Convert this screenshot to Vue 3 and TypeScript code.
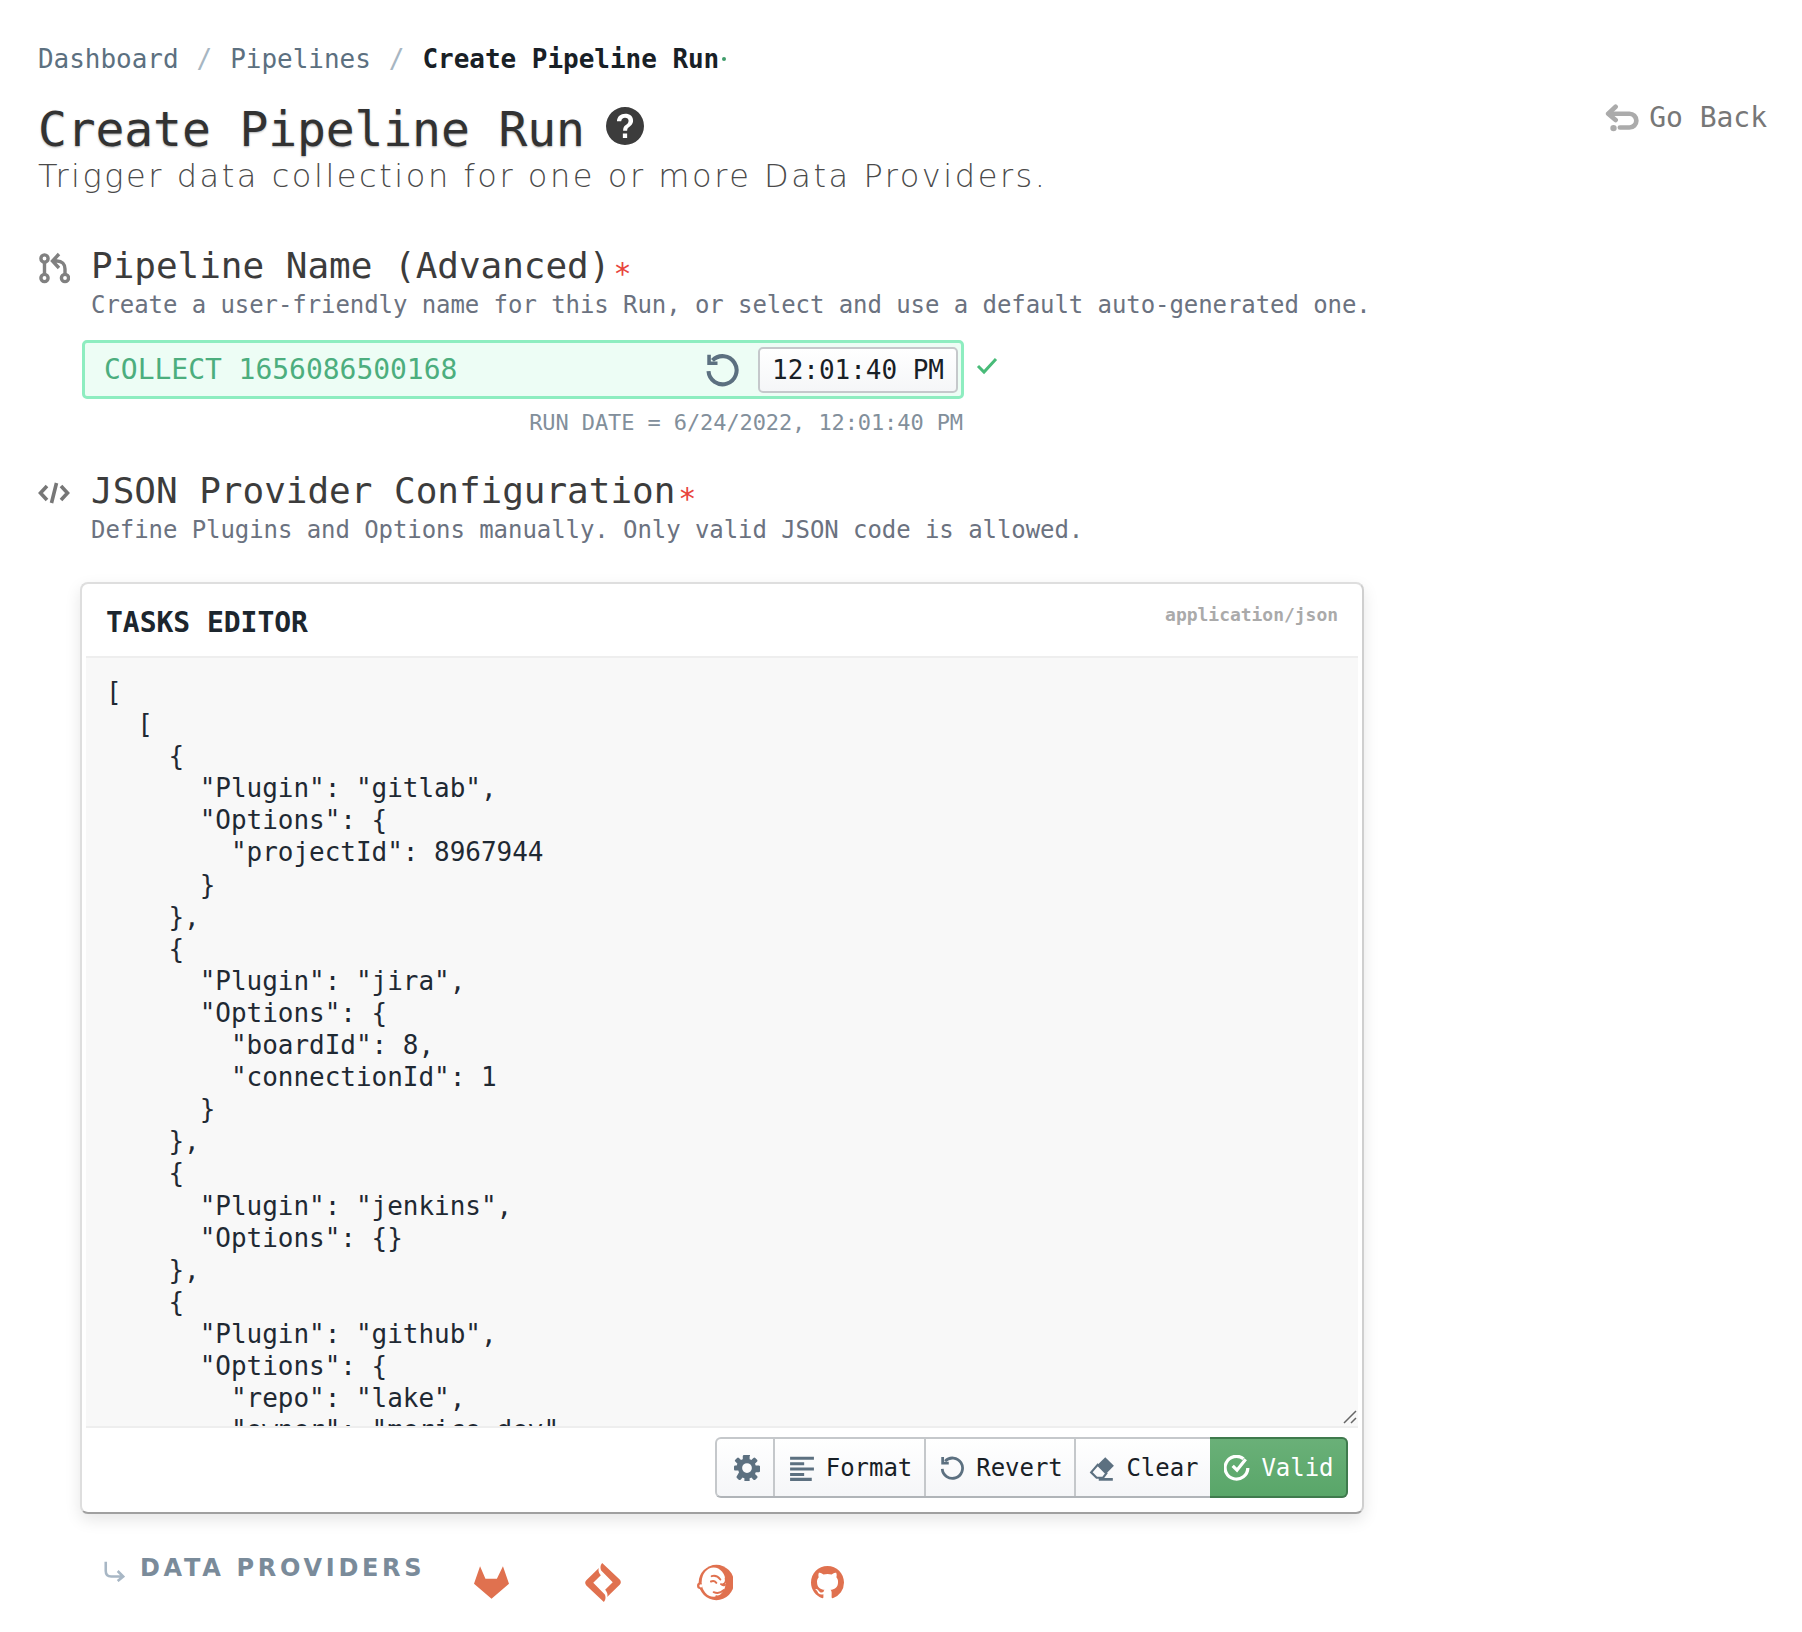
<script setup lang="ts">
const crumbs: string[] = ['Dashboard', 'Pipelines']
const code: string = `[
  [
    {
      "Plugin": "gitlab",
      "Options": {
        "projectId": 8967944
      }
    },
    {
      "Plugin": "jira",
      "Options": {
        "boardId": 8,
        "connectionId": 1
      }
    },
    {
      "Plugin": "jenkins",
      "Options": {}
    },
    {
      "Plugin": "github",
      "Options": {
        "repo": "lake",
        "owner": "merico-dev",`
</script>

<template>
  <div class="page">
    <nav class="crumbs">
      <template v-for="c in crumbs" :key="c">
        <span class="crumb">{{ c }}</span>
        <span class="sep">/</span>
      </template>
      <span class="crumb-current">Create Pipeline Run</span>
      <span class="crumb-dot"></span>
    </nav>

    <header class="head">
      <div class="head-main">
        <h1 class="title">
          <span>Create Pipeline Run</span>
          <svg class="help" viewBox="0 0 16 16"><path fill="#3c3c3c" fill-rule="evenodd" d="M8 0a8 8 0 1 0 0 16A8 8 0 0 0 8 0zm.9 13H7.100v-1.800h1.800V13zm1.900-5.500c-.4.5-.9.8-1.300 1.100-.4.3-.6.7-.6 1.400H7.200c0-1.200.4-1.900 1-2.300.4-.3.8-.6 1-.9.2-.3.3-.6.3-1 0-.8-.6-1.300-1.500-1.300S6.500 5 6.400 6H4.600c.1-2 1.500-3.200 3.500-3.200s3.300 1.100 3.300 2.900c0 .7-.2 1.300-.6 1.800z"/></svg>
        </h1>
        <p class="subtitle">Trigger data collection for one or more Data Providers.</p>
      </div>
      <div class="back">
        <svg class="back-icon" viewBox="0 0 32 28" fill="none" stroke="#ababab" stroke-width="4.400" stroke-linecap="round" stroke-linejoin="round"><path d="M10 3 3 9.500l7 6"/><path d="M4 9.500h19a6.500 6.500 0 0 1 0 13h-9"/><circle cx="8" cy="23" r="3" fill="#ababab" stroke="none"/></svg>
        <span>Go Back</span>
      </div>
    </header>

    <section class="section first">
      <svg class="sec-icon" viewBox="0 0 32 32" fill="none" stroke="#808080" stroke-width="3.400"><circle cx="6.500" cy="6.500" r="3.600"/><circle cx="6.500" cy="26" r="3.600"/><circle cx="27" cy="26" r="3.600"/><path d="M6.500 10v12.500M27 22.500V17c0-5-3-8-8-8h-4M21 2l-6.500 7 6.500 7"/></svg>
      <div>
        <h2 class="sec-title">Pipeline Name (Advanced)<span class="req">*</span></h2>
        <p class="sec-desc">Create a user-friendly name for this Run, or select and use a default auto-generated one.</p>
      </div>
    </section>

    <div class="name-row">
      <div class="name-input">
        <span class="name-text">COLLECT 1656086500168</span>
        <svg class="reset" viewBox="0 0 32 32" fill="none" stroke="#5c7080" stroke-width="3.600"><path d="M7.500 7.500A12.500 12.500 0 1 1 4 17"/><path d="M4.500 2.500v7.500H12" stroke-width="3.200"/></svg>
        <span class="time">12:01:40 PM</span>
      </div>
      <svg class="check" viewBox="0 0 24 24" fill="none" stroke="#48bb78" stroke-width="3"><path d="M3 13l6 6L21 6"/></svg>
    </div>
    <div class="run-date">RUN DATE = 6/24/2022, 12:01:40 PM</div>

    <section class="section second">
      <svg class="sec-icon code-icon" viewBox="0 0 32 24" fill="none" stroke="#777" stroke-width="3.600"><path d="M9 5 2.500 12 9 19M23 5l6.500 7L23 19M18.500 2l-5 20"/></svg>
      <div>
        <h2 class="sec-title">JSON Provider Configuration<span class="req">*</span></h2>
        <p class="sec-desc">Define Plugins and Options manually. Only valid JSON code is allowed.</p>
      </div>
    </section>

    <div class="card">
      <div class="card-head">
        <span class="card-title">TASKS EDITOR</span>
        <span class="card-mime">application/json</span>
      </div>
      <div class="editor">
        <pre class="code">{{ code }}</pre>
        <svg class="grip" viewBox="0 0 16 16" stroke="#666" stroke-width="1.500"><path d="M2 14 14 2M9 14l5-5"/></svg>
      </div>
      <div class="card-foot">
        <div class="btns">
          <div class="btn btn-gear">
            <svg class="btn-icon" viewBox="0 0 16 16"><path fill="#5c7080" fill-rule="evenodd" d="M15.190 6.390h-1.850c-.110-.370-.260-.710-.450-1.040l1.310-1.310c.310-.310.310-.820 0-1.130l-1.100-1.100a.8.800 0 0 0-1.130 0l-1.310 1.300c-.330-.190-.680-.340-1.050-.450V.810A.8.800 0 0 0 9.810 0H6.200a.8.800 0 0 0-.8.810v1.850c-.380.110-.720.260-1.050.450L3.040 1.810a.8.800 0 0 0-1.130 0l-1.100 1.100a.8.800 0 0 0 0 1.130l1.300 1.310c-.19.330-.34.670-.45 1.040H.81a.8.800 0 0 0-.81.800v1.620c0 .45.360.8.810.8h1.850c.11.380.26.720.45 1.050L1.810 12.960a.8.800 0 0 0 0 1.130l1.100 1.100c.31.310.82.310 1.130 0l1.310-1.300c.33.190.67.340 1.050.450v1.850c0 .450.350.810.800.810h1.620a.8.800 0 0 0 .8-.81v-1.850c.370-.110.720-.260 1.050-.450l1.310 1.300c.310.310.820.310 1.130 0l1.100-1.100a.8.800 0 0 0 0-1.130l-1.300-1.310c.190-.330.34-.670.45-1.050h1.850a.8.800 0 0 0 .81-.8V7.190a.8.800 0 0 0-.81-.8zM8 11a3 3 0 1 1 0-6 3 3 0 0 1 0 6z"/></svg>
          </div>
          <div class="btn btn-format">
            <svg class="btn-icon" viewBox="0 0 24 24" fill="none" stroke="#5c7080" stroke-width="2.800"><path d="M1 3h22M1 8h13M1 13h22M1 18h13M1 22.500h20"/></svg>
            <span>Format</span>
          </div>
          <div class="btn btn-revert">
            <svg class="btn-icon" viewBox="0 0 32 32" fill="none" stroke="#5c7080" stroke-width="3.400"><path d="M7.500 7.500A12.500 12.500 0 1 1 4 17"/><path d="M4.500 2.500v7.500H12"/></svg>
            <span>Revert</span>
          </div>
          <div class="btn btn-clear">
            <svg class="btn-icon" viewBox="0 0 24 24"><path fill="#5c7080" d="M15 2l8 8-7 7-8-8z"/><path fill="none" stroke="#5c7080" stroke-width="2" d="M8 9l8 8-3 4H7l-5-5z"/><path stroke="#5c7080" stroke-width="2.500" d="M9 22.500h13"/></svg>
            <span>Clear</span>
          </div>
          <div class="btn btn-valid">
            <svg class="btn-icon" viewBox="0 0 24 24" fill="none" stroke="#fff" stroke-width="3"><path d="M18 3.500A10.500 10.500 0 1 0 22 12"/><path d="M8 10l4 4 8-10" stroke-width="3"/></svg>
            <span>Valid</span>
          </div>
        </div>
      </div>
    </div>

    <div class="providers">
      <svg class="prov-arrow" viewBox="0 0 24 24" fill="none" stroke="#a8b7c5" stroke-width="2.800"><path d="M3 2v10c0 4 2 6 6 6h13M16 12l6 6-6 5"/></svg>
      <span class="prov-label">DATA PROVIDERS</span>
      <div class="prov-icons">
        <div class="prov"><svg class="gitlab" viewBox="0 0 104 97"><path fill="#e0714f" d="M18 0 34 37H68L86 0l18 52-52 45L0 52z"/></svg></div>
        <div class="prov"><svg class="jira" viewBox="0 0 109 118"><path fill="#e0714f" d="M52 0l53 50q7 8 0 16L67 103c3-7 0-15-6-22L84 58 49 23c-4-9-2-17 3-23z"/><path fill="#e0714f" d="M57 118 4 68q-7-8 0-16L42 15c-3 7 0 15 6 22L25 60l35 35c4 9 2 17-3 23z"/></svg></div>
        <div class="prov"><svg class="jenkins" viewBox="0 0 108 110"><circle cx="58" cy="55" r="53" fill="#e0714f"/><circle cx="10" cy="65" r="10" fill="#e0714f"/><ellipse cx="50" cy="54" rx="36" ry="44" fill="#fff"/><circle cx="12" cy="65" r="5" fill="#fff"/><g fill="none" stroke="#e0714f" stroke-width="6" stroke-linecap="round"><path d="M44 36c10-3 20 2 26 10M42 52c6-3 12-1 16 4M86 42c2 8-2 16-8 18M50 84c10 4 22 2 30-6M58 96c10 2 20-2 26-8M72 60c4 4 8 4 12 2"/></g></svg></div>
        <div class="prov"><svg class="github" viewBox="0 0 16 16"><path fill="#e0714f" d="M8 0C3.580 0 0 3.580 0 8c0 3.540 2.290 6.530 5.470 7.590.4.070.55-.17.55-.38 0-.19-.01-.82-.01-1.490-2.010.37-2.530-.49-2.690-.94-.09-.23-.48-.94-.82-1.130-.28-.15-.68-.52-.01-.53.63-.01 1.080.58 1.230.82.72 1.210 1.870.87 2.330.66.07-.52.28-.87.51-1.070-1.780-.2-3.640-.89-3.640-3.950 0-.87.31-1.590.82-2.150-.08-.2-.36-1.020.08-2.120 0 0 .67-.21 2.200.82.64-.18 1.320-.27 2-.27.68 0 1.360.09 2 .27 1.530-1.040 2.200-.82 2.200-.82.44 1.100.16 1.920.08 2.120.51.56.82 1.270.82 2.150 0 3.070-1.870 3.750-3.650 3.950.29.25.54.73.54 1.480 0 1.070-.01 1.930-.01 2.200 0 .21.15.46.55.38A8.013 8.013 0 0 0 16 8c0-4.420-3.580-8-8-8z"/></svg></div>
      </div>
    </div>
  </div>
</template>

<style>
html, body { background: #fff; }
</style>

<style scoped>
.page {
  box-sizing: border-box;
  width: 1802px;
  height: 1632px;
  padding: 41px 35px 0 38px;
  font-family: "DejaVu Sans Mono", "Liberation Mono", monospace;
  letter-spacing: -0.002em;
  color: #1f2933;
  overflow: hidden;
}
.crumbs { display: flex; align-items: center; height: 36px; font-size: 26px; line-height: 36px; }
.crumb { color: #5c7080; }
.sep { color: #a7b6c2; margin: 0 18px; }
.crumb-current { font-weight: 700; color: #182026; }
.crumb-dot { width: 4px; height: 4px; border-radius: 50%; background: #3f9c6b; margin-left: 3px; }
.head { display: flex; justify-content: space-between; align-items: flex-start; margin-top: 24px; }
.title { display: flex; align-items: center; gap: 21px; margin: 0; font-size: 48px; line-height: 56px; font-weight: 400; letter-spacing: -0.12px; color: #323232; text-shadow: 0 1px 2px rgba(0,0,0,.3); }
.help { width: 38px; height: 38px; margin-top: -6px; }
.subtitle { margin: 0; font-family: "DejaVu Sans", sans-serif; font-weight: 200; font-size: 32px; line-height: 38px; letter-spacing: 2.55px; color: #4a4a4a; }
.back { display: flex; align-items: center; gap: 10px; font-size: 28px; line-height: 34px; color: #777; }
.back-icon { width: 34px; height: 31px; }
.section { display: flex; gap: 21px; }
.first { margin-top: 49px; }
.second { margin-top: 30px; }
.sec-icon { width: 32px; height: 32px; margin-top: 8px; flex: none; }
.code-icon { height: 24px; margin-top: 12px; }
.sec-title { margin: 0; font-size: 36px; line-height: 44px; font-weight: 400; color: #3c3c3c; }
.req { color: #e8453c; font-size: 30px; line-height: 1; margin-left: 3px; vertical-align: -6px; }
.sec-desc { margin: 0; font-size: 24px; line-height: 32px; letter-spacing: -0.07px; color: #6b7280; }
.name-row { display: flex; align-items: center; gap: 11px; margin: 19px 0 0 44px; }
.name-input { box-sizing: border-box; width: 882px; height: 59px; display: flex; align-items: center; border: 3px solid #8eedc0; border-radius: 5px; background: #edfdf5; padding: 0 3px 0 19px; }
.name-text { flex: 1; font-size: 28px; color: #4cae7e; }
.reset { width: 36px; height: 36px; margin-right: 18px; }
.time { box-sizing: border-box; width: 200px; height: 46px; display: flex; align-items: center; justify-content: center; font-size: 26px; color: #182026; background: linear-gradient(#fff, #f5f6f8); border: 2px solid #c5c8cb; border-radius: 5px; }
.check { width: 24px; height: 24px; margin-top: -9px; }
.run-date { width: 925px; text-align: right; margin-top: 8px; font-size: 22px; line-height: 32px; letter-spacing: -0.1px; color: #828f9b; }
.card { box-sizing: border-box; width: 1284px; height: 932px; margin: 36px 0 0 42px; display: flex; flex-direction: column; background: #fff; border: 2px solid #dedede; border-right-color: #cfcfcf; border-bottom-color: #a0a0a0; border-radius: 8px; box-shadow: 0 6px 16px rgba(0,0,0,.1); }
.card-head { flex: none; height: 72px; margin: 0 4px; display: flex; justify-content: space-between; padding: 0 20px 0 20px; border-bottom: 2px solid #eee; }
.card-title { font-size: 28px; font-weight: 700; line-height: 78px; color: #1c262e; }
.card-mime { font-size: 18px; font-weight: 700; line-height: 62px; color: #aaa; }
.editor { position: relative; flex: none; height: 768px; margin: 0 4px; background: #f8f8f8; overflow: hidden; border-bottom: 2px solid #eee; }
.code { margin: 0; padding: 18px 20px; font-family: inherit; font-size: 26px; line-height: 32.1px; color: #1f2933; }
.grip { position: absolute; right: 0; bottom: 1px; width: 16px; height: 16px; }
.card-foot { flex: 1; display: flex; justify-content: flex-end; padding: 9px 14px 0 0; }
.btns { display: flex; height: 61px; box-sizing: border-box; border: 2px solid #c5c8cb; border-bottom-color: #b0b4b8; border-radius: 6px; background: linear-gradient(#fff, #f5f6f8); font-size: 24px; color: #182026; }
.btn { box-sizing: border-box; display: flex; align-items: center; justify-content: center; gap: 11px; padding-left: 2px; border-right: 2px solid #c5c8cb; }
.btn-icon { width: 26px; height: 26px; flex: none; }
.btn-gear { width: 58px; padding-left: 3px; }
.btn-format { width: 151px; }
.btn-revert { width: 150px; }
.btn-clear { width: 134px; border-right: 0; }
.btn-valid { width: 138px; margin: -2px -2px -2px 0; color: #fff; background: linear-gradient(#6ab078, #59a669); border: 2px solid #3f7a4d; border-left: 0; border-radius: 0 6px 6px 0; }
.providers { display: flex; align-items: flex-start; margin: 34px 0 0 65px; }
.prov-arrow { width: 22px; height: 22px; margin-top: 12px; flex: none; }
.prov-label { width: 299px; margin-left: 15px; font-family: "DejaVu Sans", sans-serif; font-weight: 700; font-size: 24px; line-height: 41px; letter-spacing: 3.7px; color: #7a8b9a; white-space: nowrap; }
.prov-icons { display: flex; gap: 74px; margin: 15px 0 0 33px; }
.prov { width: 38px; height: 38px; flex: none; display: flex; align-items: center; justify-content: center; }
.gitlab { width: 35px; height: 33px; }
.jira { width: 36px; height: 39px; flex: none; }
.jenkins { width: 36px; height: 37px; }
.github { width: 33px; height: 33px; }
</style>
